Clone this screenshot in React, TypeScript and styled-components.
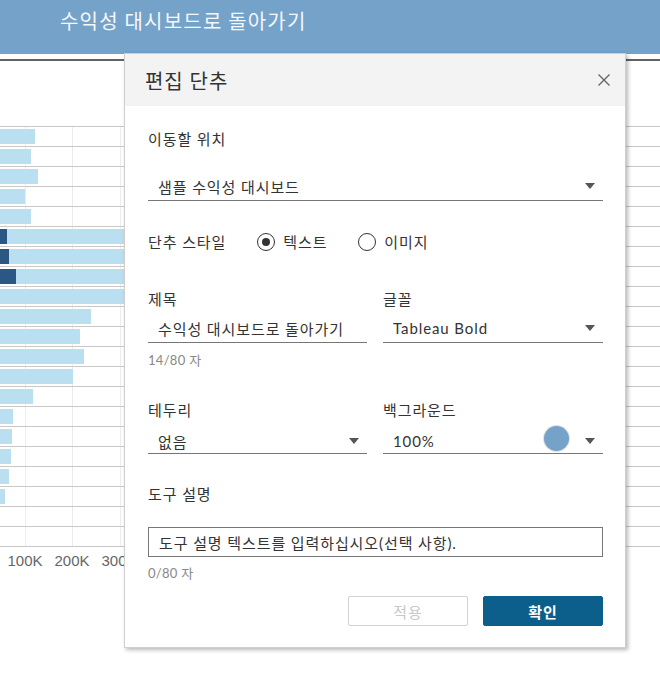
import React from "react";
import styled, { createGlobalStyle } from "styled-components";

const GlobalStyle = createGlobalStyle`
  html, body { margin: 0; padding: 0; background: #fff; }
  body { font-family: Lato, "Noto Sans CJK KR", sans-serif; color: #333; }
  * { box-sizing: border-box; }
`;

const Page = styled.div`
  position: relative;
  width: 660px;
  height: 696px;
  overflow: hidden;
  background: #fff;
`;

const TopBar = styled.div`
  height: 54px;
  background: #74a2c8;
  display: flex;
  align-items: flex-start;
  padding: 8px 0 0 60px;
  font-size: 20px;
  line-height: 26px;
  letter-spacing: 1.2px;
  color: #f4f7fa;
  font-family: "Noto Sans CJK KR", sans-serif;
`;

const Divider = styled.div`
  margin-top: 5px;
  height: 2px;
  background: #616161;
`;

const Chart = styled.div`
  margin-top: 65px;
  width: 660px;
  background-image: linear-gradient(#ececec, #ececec), linear-gradient(#ececec, #ececec),
    linear-gradient(#ececec, #ececec);
  background-size: 1px 100%;
  background-position: 25px 0, 72px 0, 120px 0;
  background-repeat: no-repeat;
  border-bottom: 1px solid #c8c8c8;
`;

const Row = styled.div`
  height: 20px;
  border-top: 1px solid #c8c8c8;
  display: flex;
  align-items: center;
  padding-top: 2px;
  padding-bottom: 3px;
`;

const Bar = styled.div<{ $dark?: boolean }>`
  height: 15px;
  background: ${(p) => (p.$dark ? "#2b5785" : "#b9dff1")};
  flex: none;
`;

const Axis = styled.div`
  display: flex;
  padding-left: 1.5px;
  margin-top: 5px;
`;

const Tick = styled.div`
  width: 47px;
  text-align: center;
  font-family: "Liberation Sans", sans-serif;
  font-size: 15px;
  line-height: 18px;
  color: #666;
  flex: none;
`;

const Dialog = styled.div`
  position: absolute;
  left: 124px;
  top: 53px;
  width: 502px;
  height: 595px;
  background: #fff;
  border: 1px solid #cfcfcf;
  box-shadow: 2px 2px 4px rgba(0, 0, 0, 0.28);
  display: flex;
  flex-direction: column;
  letter-spacing: 0.9px;
`;

const DialogHeader = styled.div`
  height: 52px;
  background: #f3f3f3;
  display: flex;
  align-items: center;
  justify-content: space-between;
  padding: 0 14px 0 20px;
  flex: none;
`;

const DialogTitle = styled.div`
  font-size: 20px;
  color: #333;
  line-height: 26px;
  padding-top: 2px;
`;

const CloseButton = styled.button`
  width: 14px;
  height: 14px;
  padding: 0;
  border: 0;
  background: none;
  display: flex;
  cursor: pointer;
`;

const Body = styled.div`
  padding: 0 22px 0 23px;
  display: flex;
  flex-direction: column;
`;

const Label = styled.div<{ $mt?: number }>`
  font-size: 15px;
  line-height: 20px;
  color: #333;
  margin-top: ${(p) => p.$mt ?? 0}px;
`;

const SelectBox = styled.div<{ $mt?: number; $pt?: number }>`
  height: 29px;
  border-bottom: 1px solid #777;
  display: flex;
  align-items: center;
  padding: ${(p) => p.$pt ?? 0}px 8px 0 10px;
  margin-top: ${(p) => p.$mt ?? 0}px;
  font-size: 15px;
  color: #333;
  gap: 16px;
`;

const Value = styled.span`
  flex: 1;
  white-space: nowrap;
`;

const Caret = styled.span`
  width: 0;
  height: 0;
  border-left: 5px solid transparent;
  border-right: 5px solid transparent;
  border-top: 6px solid #555;
  flex: none;
`;

const Swatch = styled.span<{ $color: string }>`
  width: 25px;
  height: 25px;
  border-radius: 50%;
  background: ${(p) => p.$color};
  box-shadow: 0 0 0 1px #e2e2e2;
  flex: none;
  margin-top: -6px;
`;

const RadioRow = styled.div`
  display: flex;
  align-items: center;
  margin-top: 31px;
  font-size: 15px;
  line-height: 20px;
`;

const RadioGroup = styled.div`
  display: flex;
  gap: 31px;
  margin-left: 31px;
`;

const RadioItem = styled.label`
  display: flex;
  align-items: center;
  gap: 8px;
`;

const RadioCircle = styled.span<{ $checked?: boolean }>`
  width: 18px;
  height: 18px;
  border-radius: 50%;
  border: 1.5px solid #333;
  display: flex;
  align-items: center;
  justify-content: center;
  &::after {
    content: "";
    width: 8px;
    height: 8px;
    border-radius: 50%;
    background: ${(p) => (p.$checked ? "#333" : "transparent")};
  }
`;

const FieldGrid = styled.div<{ $mt: number }>`
  display: grid;
  grid-template-columns: 219px 220px;
  column-gap: 16px;
  margin-top: ${(p) => p.$mt}px;
  align-items: start;
`;

const Field = styled.div`
  display: flex;
  flex-direction: column;
`;

const Helper = styled.div<{ $mt: number }>`
  font-size: 13px;
  line-height: 18px;
  letter-spacing: 0.3px;
  color: #888;
  margin-top: ${(p) => p.$mt}px;
`;

const TextBox = styled.div`
  margin-top: 23px;
  height: 30px;
  border: 1px solid #777;
  display: flex;
  align-items: center;
  padding-left: 10px;
  font-size: 15px;
  color: #333;
`;

const Actions = styled.div`
  display: flex;
  justify-content: flex-end;
  gap: 15px;
  margin-top: 14px;
`;

const Button = styled.button<{ $primary?: boolean }>`
  width: 120px;
  height: 30px;
  border-radius: 2px;
  font-family: Lato, "Noto Sans CJK KR", sans-serif;
  font-size: 15px;
  letter-spacing: 0.9px;
  font-weight: ${(p) => (p.$primary ? 700 : 400)};
  color: ${(p) => (p.$primary ? "#fff" : "#c8c8c8")};
  background: ${(p) => (p.$primary ? "#0b5f8a" : "#fff")};
  border: 1px solid ${(p) => (p.$primary ? "#0b5f8a" : "#d2d2d2")};
  padding: 0;
`;

const rows: { dark?: number; light: number }[] = [
  { light: 35 },
  { light: 31 },
  { light: 38 },
  { light: 25 },
  { light: 31 },
  { dark: 7, light: 600 },
  { dark: 9, light: 600 },
  { dark: 16, light: 600 },
  { light: 600 },
  { light: 91 },
  { light: 80 },
  { light: 84 },
  { light: 73 },
  { light: 33 },
  { light: 13 },
  { light: 12 },
  { light: 11 },
  { light: 9 },
  { light: 5 },
  { light: 0 },
  { light: 0 },
];

export default function App() {
  return (
    <Page>
      <GlobalStyle />
      <TopBar>수익성 대시보드로 돌아가기</TopBar>
      <Divider />
      <Chart>
        {rows.map((r, i) => (
          <Row key={i}>
            {r.dark ? <Bar $dark style={{ width: r.dark }} /> : null}
            {r.light ? <Bar style={{ width: r.light }} /> : null}
          </Row>
        ))}
      </Chart>
      <Axis>
        <Tick>100K</Tick>
        <Tick>200K</Tick>
        <Tick>300K</Tick>
      </Axis>

      <Dialog>
        <DialogHeader>
          <DialogTitle>편집 단추</DialogTitle>
          <CloseButton aria-label="닫기">
            <svg width="14" height="14" viewBox="0 0 14 14">
              <path d="M1.5 1.5 L12.5 12.5 M12.5 1.5 L1.5 12.5" stroke="#666" strokeWidth="1.4" fill="none" />
            </svg>
          </CloseButton>
        </DialogHeader>
        <Body>
          <Label $mt={23}>이동할 위치</Label>
          <SelectBox $mt={23}>
            <Value>샘플 수익성 대시보드</Value>
            <Caret />
          </SelectBox>

          <RadioRow>
            <span>단추 스타일</span>
            <RadioGroup>
              <RadioItem>
                <RadioCircle $checked />
                텍스트
              </RadioItem>
              <RadioItem>
                <RadioCircle />
                이미지
              </RadioItem>
            </RadioGroup>
          </RadioRow>

          <FieldGrid $mt={37}>
            <Field>
              <Label>제목</Label>
              <SelectBox $mt={5}>
                <Value>수익성 대시보드로 돌아가기</Value>
              </SelectBox>
              <Helper $mt={8}>14/80 자</Helper>
            </Field>
            <Field>
              <Label>글꼴</Label>
              <SelectBox $mt={5}>
                <Value>Tableau Bold</Value>
                <Caret />
              </SelectBox>
            </Field>
          </FieldGrid>

          <FieldGrid $mt={31}>
            <Field>
              <Label>테두리</Label>
              <SelectBox $mt={5} $pt={4}>
                <Value>없음</Value>
                <Caret />
              </SelectBox>
            </Field>
            <Field>
              <Label>백그라운드</Label>
              <SelectBox $mt={5} $pt={4}>
                <Value>100%</Value>
                <Swatch $color="#74a2c8" />
                <Caret />
              </SelectBox>
            </Field>
          </FieldGrid>

          <Label $mt={30}>도구 설명</Label>
          <TextBox>도구 설명 텍스트를 입력하십시오(선택 사항).</TextBox>
          <Helper $mt={7}>0/80 자</Helper>

          <Actions>
            <Button disabled>적용</Button>
            <Button $primary>확인</Button>
          </Actions>
        </Body>
      </Dialog>
    </Page>
  );
}
